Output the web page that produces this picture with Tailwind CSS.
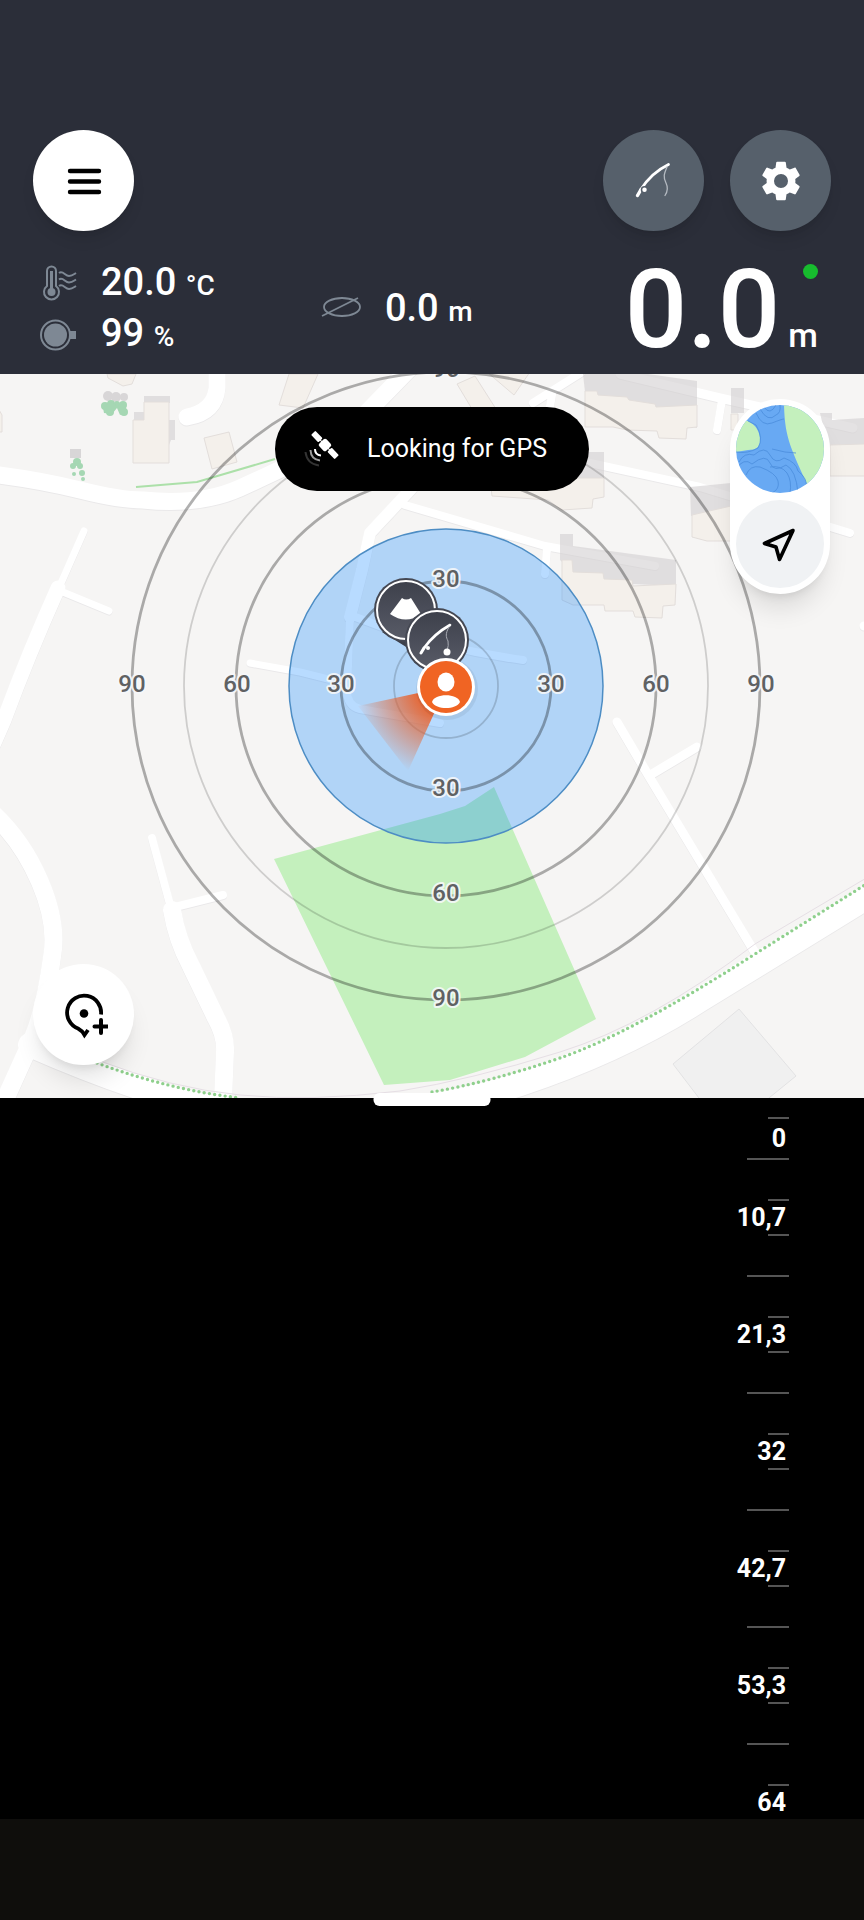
<!DOCTYPE html>
<html lang="en">
<head>
    <meta charset="UTF-8">
    <meta name="viewport" content="width=device-width, initial-scale=1.0">
    <title>Sonar - Map</title>
    <script src="https://cdn.jsdelivr.net/npm/@tailwindcss/browser@4"></script>
</head>
<body class="min-h-screen flex flex-col bg-black text-white font-[Roboto,sans-serif]">

    <!-- Header -->
    <header class="bg-[#2b2e39] px-[33px] pt-[130px] pb-3">
        <div class="flex items-center justify-between">
            <button type="button" aria-label="Menu" class="size-[101px] rounded-full bg-white flex items-center justify-center shadow-lg">
                <svg class="size-10" viewBox="0 0 40 40" stroke="#000" stroke-width="4.4" stroke-linecap="round"><path d="M6 10h29M6 20.500h29M6 31h29"/></svg>
            </button>
            <div class="flex gap-[26px]">
                <button type="button" aria-label="Fishing" class="size-[101px] rounded-full bg-[#56606b] flex items-center justify-center shadow-lg">
                    <svg class="size-10" viewBox="0 0 40 40" fill="none" stroke="#fff" stroke-linecap="round">
                        <path d="M3.500 34.500L7 28.500" stroke-width="3.400"/>
                        <path d="M6.500 29Q17 12 34.500 3.500" stroke-width="2.800"/>
                        <path d="M33 6C30 13 29 16 32 22C34 26 34 30 31 34.500" stroke="#b4bac1" stroke-width="1.300"/>
                        <circle cx="10.500" cy="28.700" r="3" fill="#fff" stroke="#56606b" stroke-width="1.500"/>
                    </svg>
                </button>
                <button type="button" aria-label="Settings" class="size-[101px] rounded-full bg-[#56606b] flex items-center justify-center shadow-lg">
                    <svg class="size-12" viewBox="0 0 24 24" fill="#fff"><path d="M19.140 12.940c.04-.3.06-.61.06-.94 0-.32-.02-.64-.07-.94l2.030-1.580c.18-.14.23-.41.12-.61l-1.920-3.320c-.12-.22-.37-.29-.59-.22l-2.390.96c-.5-.38-1.030-.7-1.620-.94l-.36-2.540c-.04-.24-.24-.41-.48-.41h-3.840c-.24 0-.43.17-.47.41l-.36 2.540c-.59.24-1.130.57-1.620.94l-2.390-.96c-.22-.08-.47 0-.59.22L2.740 8.870c-.12.21-.08.47.12.61l2.030 1.580c-.05.3-.09.63-.09.94s.02.64.07.94l-2.030 1.580c-.18.14-.23.41-.12.61l1.920 3.320c.12.22.37.29.59.22l2.390-.96c.5.38 1.030.7 1.620.94l.36 2.540c.05.24.24.41.48.41h3.840c.24 0 .44-.17.47-.41l.36-2.540c.59-.24 1.130-.56 1.620-.94l2.390.96c.22.08.47 0 .59-.22l1.920-3.320c.12-.22.07-.47-.12-.61l-2.010-1.580zM12 15.500a3.500 3.500 0 1 1 0-7 3.500 3.500 0 0 1 0 7z"/></svg>
                </button>
            </div>
        </div>

        <!-- Readings -->
        <div class="mt-[23px] flex items-center justify-between pl-1.5 pr-[13px] font-medium">
            <div class="flex flex-col">
                <div class="flex items-center gap-6">
                    <svg class="size-[38px]" viewBox="0 0 38 38" fill="none" stroke="#7e8894" stroke-width="2">
                        <path d="M8 22V7a4.500 4.500 0 0 1 9 0v15a7.500 7.500 0 1 1-9 0z"/>
                        <path d="M12.500 7v20" stroke-width="3"/>
                        <circle cx="12.500" cy="28" r="4" fill="#7e8894" stroke="none"/>
                        <path d="M20 9c4-3 6 3 10 3 3 0 4-1 7-3M20 15.500c4-3 6 3 10 3 3 0 4-1 7-3M20 22c4-3 6 3 10 3 3 0 4-1 7-3"/>
                    </svg>
                    <p class="text-[38px] leading-[51px]">20.0 <span class="text-[28px] leading-none">°C</span></p>
                </div>
                <div class="flex items-center gap-6">
                    <svg class="size-[38px]" viewBox="0 0 38 38">
                        <circle cx="16.500" cy="20" r="14.500" fill="none" stroke="#7e8894" stroke-width="2"/>
                        <circle cx="16.500" cy="20" r="11.500" fill="#7e8894"/>
                        <path d="M31 16h6v8h-6z" fill="#7e8894"/>
                    </svg>
                    <p class="text-[38px] leading-[51px]">99 <span class="text-[28px] leading-none">%</span></p>
                </div>
            </div>
            <div class="flex items-center gap-6 pr-[46px]">
                <svg class="size-10" viewBox="0 0 40 40" fill="none" stroke="#7e8894" stroke-width="1.800"><ellipse cx="21" cy="19" rx="18" ry="9"/><path d="M1 28L37 10"/></svg>
                <p class="text-[38px] leading-[51px]">0.0 <span class="text-[28px] leading-none">m</span></p>
            </div>
            <div class="relative flex items-baseline gap-2 pt-1">
                <p class="text-[110px] leading-[104px]">0.0</p>
                <span class="text-[34px] leading-none">m</span>
                <span class="absolute right-0 top-2.5 size-[15px] rounded-full bg-[#17bc2e]"></span>
            </div>
        </div>
    </header>

    <!-- Map -->
    <main class="relative w-full aspect-[864/724]">
        <svg class="size-full bg-[#f6f5f4]" viewBox="0 374 864 724" preserveAspectRatio="xMidYMid slice">
            <defs>
                <radialGradient id="beam" gradientUnits="userSpaceOnUse" cx="446" cy="687" r="92">
                    <stop offset="0.300" stop-color="#e8622c" stop-opacity="0.950"/>
                    <stop offset="1" stop-color="#e8622c" stop-opacity="0"/>
                </radialGradient>
                <linearGradient id="pin" x1="0" y1="0" x2="0" y2="1">
                    <stop offset="0" stop-color="#3d404b"/>
                    <stop offset="1" stop-color="#585b67"/>
                </linearGradient>
                <g id="roads">
                    <path stroke-width="17" d="M-9 474Q40 480 80 490T143 500Q200 506 240 488T340 440L412 366M217 366V388Q215 412 187 417"/>
                    <path stroke-width="7" d="M84 531L58 590L109 611M250 663L300 672L348 684"/>
                    <path stroke-width="15" d="M58 588Q28 655 4 720L-10 752"/>
                    <path stroke-width="12" d="M412 488L370 533L362 570L350 617"/>
                    <path stroke-width="8" d="M350 617L347 690Q347 706 360 709L440 723M350 615L385 628Q450 650 523 660M405 505L545 546L655 566M547 548L545 574M590 463L700 487L850 533M533 403L582 372M722 400L717 430M552 395L549 412"/>
                    <path stroke-width="9" d="M620 374L720 398L853 428M617 722L650 778L757 956M652 774L697 747M864 626h9"/>
                    <path stroke-width="18" d="M-9 812Q22 840 40 882T52 957Q45 1010 32 1040L4 1102M172 910Q177 940 191 966L216 1018Q226 1036 225 1052L223 1100"/>
                    <path stroke-width="8" d="M152 838L171 908L223 895"/>
                    <path stroke-width="24" d="M30 1045Q110 1080 170 1097T280 1118Q420 1117 520 1084T700 1000L874 893"/>
                </g>
            </defs>

            <!-- Plot, roads -->
            <path d="M739 1009L796 1076L764 1102H702L673 1064z" fill="#f0f0f0" stroke="#e2e2e3"/>
            <use href="#roads" fill="none" stroke="#eae9ea" stroke-linecap="round" stroke-linejoin="round" transform="translate(0 1)"/>
            <use href="#roads" fill="none" stroke="#fff" stroke-linecap="round" stroke-linejoin="round"/>

            <!-- Buildings -->
            <g fill="#d2cfd1" fill-opacity="0.600">
                <path d="M144 396L170 396L170 403H144V420H134V412H144zM169 420H175V440H171L169 445z"/>
                <path d="M583 374H648L697 381V428L585 392z"/>
                <path d="M560 452H604V497L593 479H560z"/>
                <path d="M690 487L731 483V509L691 516z"/>
                <path d="M560 534H573V546L632 554L676 560V586L632 584L604 579L573 572L560 560z"/>
                <path d="M731 388H744V413H731zM820 413H832V420L864 418V444L828 447z"/>
            </g>
            <g fill="#f4f0eb" stroke="#e3dedb" stroke-width="1">
                <path d="M133 420H144V402H169V463H133z"/>
                <path d="M204 438L229 432L237 462L212 469z"/>
                <path d="M289 374H318L303 408L279 405z"/>
                <path d="M107 374H136L132 384L123 386L108 378z"/>
                <path d="M457 384L475 376L496 409H472zM487 372H530L514 395z"/>
                <path d="M585 391H597L598 395L627 397L629 400L655 404L656 407L697 405V427L687 428L686 439L659 438L657 431L627 430L613 427H585z"/>
                <path d="M490 478H604V497L593 499L592 508L562 510L548 500L492 496z"/>
                <path d="M692 515L731 506V541H707L692 537z"/>
                <path d="M562 560H572L573 572L603 573L604 579L632 580L633 586L676 584L675 605L663 606L662 618L635 617L633 611H605L604 605H573L562 600z"/>
                <path d="M830 445L864 444H870V476H830zM731 414H738V430H731zM-2 408L2 415V432H-2z"/>
            </g>

            <!-- Trees -->
            <g fill="#d8d6d7">
                <circle cx="108" cy="396" r="5"/><circle cx="116" cy="397" r="5"/><circle cx="124" cy="397" r="4"/>
                <path d="M70 449H81V458H70z"/>
            </g>
            <g fill="#a5d7b3">
                <circle cx="105" cy="406" r="4"/><circle cx="111" cy="404" r="4"/><circle cx="110" cy="412" r="4"/><circle cx="123" cy="405" r="4"/><circle cx="124" cy="412" r="4"/><circle cx="117" cy="404" r="3"/>
                <path d="M103 408L112 402L117 406L125 404L127 412L120 415L117 408L112 414L104 413z"/>
                <circle cx="77" cy="462" r="4"/><circle cx="73" cy="466" r="3"/><circle cx="80" cy="466" r="3"/><circle cx="74" cy="474" r="2"/><circle cx="82" cy="473" r="3"/><circle cx="83" cy="479" r="2"/>
            </g>

            <!-- Paths along the roads -->
            <path d="M136 487L197 482L275 459" fill="none" stroke="#ace0a9" stroke-width="2"/>
            <path d="M97 1060Q170 1088 240 1095T400 1091Q470 1080 560 1052T755 944L868 877" fill="none" stroke="#e6dfe5"/>
            <path d="M97 1063Q170 1090 240 1098M432 1092Q490 1082 560 1058T755 954L868 883" fill="none" stroke="#8fd08d" stroke-width="3.400" stroke-linecap="round" stroke-dasharray="0 5.300"/>

            <!-- Zones and range rings -->
            <path d="M274 859L440 814L465 806L494 787L596 1019L525 1057L450 1080L384 1085z" fill="#c4f0bd"/>
            <circle cx="446" cy="686" r="157" fill="#007fff" fill-opacity="0.280" stroke="#4d8dc4" stroke-width="1.500"/>
            <g fill="none" stroke="#000">
                <g stroke-opacity="0.160" stroke-width="1.800">
                    <circle cx="446" cy="686" r="52"/>
                    <circle cx="446" cy="686" r="262"/>
                </g>
                <g stroke-opacity="0.310" stroke-width="2.800">
                    <circle cx="446" cy="686" r="105"/>
                    <circle cx="446" cy="686" r="210"/>
                    <circle cx="446" cy="686" r="314"/>
                </g>
            </g>
            <g class="text-2xl font-medium [paint-order:stroke]" fill="#5f6163" stroke="#f6f8fa" stroke-opacity="0.900" stroke-width="4" stroke-linejoin="round" text-anchor="middle">
                <text x="132" y="692">90</text>
                <text x="237" y="692">60</text>
                <text x="341" y="692">30</text>
                <text x="551" y="692">30</text>
                <text x="656" y="692">60</text>
                <text x="761" y="692">90</text>
                <text x="446" y="377">90</text>
                <text x="446" y="587">30</text>
                <text x="446" y="796">30</text>
                <text x="446" y="901">60</text>
                <text x="446" y="1006">90</text>
            </g>

            <!-- Markers -->
            <path d="M446 687L358 706L408 771z" fill="url(#beam)"/>
            <path d="M382 632L424 658L436 632zM414 662L446 686L460 664z" fill="#3d404b"/>
            <circle cx="406" cy="610" r="32" fill="#454853"/>
            <circle cx="406" cy="610" r="29" fill="url(#pin)" stroke="#fff" stroke-width="2"/>
            <path d="M402 598Q406 601 411 598L421 614Q406 625 390 614z" fill="#fff"/>
            <circle cx="437" cy="640" r="32" fill="#454853"/>
            <circle cx="437" cy="640" r="29" fill="url(#pin)" stroke="#fff" stroke-width="2"/>
            <g fill="none" stroke="#fff" stroke-linecap="round">
                <path d="M421 653L424 648" stroke-width="3"/>
                <path d="M424 648Q434 634 450 625" stroke-width="2.600"/>
                <path d="M449 627C445 634 446 637 448 641Q449 645 447 651" stroke="#a9acb4" stroke-width="1"/>
                <circle cx="428" cy="648" r="2" fill="#fff" stroke="none"/>
                <circle cx="447" cy="652" r="3.500" fill="#fff" stroke="none"/>
            </g>
            <circle cx="447" cy="689" r="31" fill="#000" fill-opacity="0.060"/>
            <circle cx="446" cy="687" r="29" fill="#fff"/>
            <circle cx="446" cy="687" r="26" fill="#f06423"/>
            <ellipse cx="446" cy="682" rx="8.500" ry="9.500" fill="#fff"/>
            <path d="M432 702C434 693 458 693 460 702C456 710 436 710 432 702z" fill="#fff"/>
        </svg>

        <!-- GPS status -->
        <div role="status" class="absolute top-[33px] left-1/2 -translate-x-1/2 h-[84px] pl-[26px] pr-[42px] rounded-full bg-black flex items-center gap-[22px] whitespace-nowrap">
            <svg class="size-11" viewBox="0 0 44 44" fill="#fff">
                <g transform="rotate(46 24 18)">
                    <rect x="19" y="13" width="10" height="10" rx="2"/>
                    <rect x="7" y="15" width="10.500" height="6" rx="1"/>
                    <rect x="30.500" y="15" width="10.500" height="6" rx="1"/>
                    <path d="M17 17.500h14v1H17z"/>
                </g>
                <g fill="none" stroke="#fff" stroke-width="2">
                    <path d="M14 22Q14 28 20 28.500"/>
                    <path d="M9.500 23Q10 32.500 19 33.500" opacity="0.600"/>
                    <path d="M4.500 25Q6 37 18 38.500" opacity="0.200"/>
                </g>
            </svg>
            <span class="text-[25px]">Looking for GPS</span>
        </div>

        <!-- Layer / compass buttons -->
        <div class="absolute top-[25px] right-[34px] flex flex-col gap-[7px] p-1.5 rounded-full bg-white shadow-xl">
            <button type="button" aria-label="Map type" class="size-[88px] rounded-full overflow-hidden">
                <svg class="size-full" viewBox="0 0 88 88">
                    <path d="M0 0h88v88H0z" fill="#68a9f3"/>
                    <path d="M48 0C49 35 55 43 75 88H88V0zM0 16H12Q24 22 24 36Q24 45 12 45L0 47z" fill="#c4f0bd"/>
                    <g fill="none" stroke="#4b8ddc" stroke-opacity="0.800">
                        <path d="M12 16L20 20Q28 33 22 43Q12 49 0 47M24 4Q32 18 40 10Q45 8 44 0M28 2Q34 11 40 0M20 8Q26 22 36 18T48 14"/>
                        <path d="M3 57Q8 47 18 50Q29 40 34 50T48 53Q60 57 62 66Q72 74 70 82M0 64Q8 52 16 59Q30 48 34 58T50 60Q60 65 62 88M10 70Q14 60 24 62Q40 68 42 76Q44 84 36 88M34 62Q45 60 51 68Q56 76 54 88M36 44Q50 48 60 48"/>
                    </g>
                </svg>
            </button>
            <button type="button" aria-label="My location" class="size-[88px] rounded-full bg-[#f0f2f4] flex items-center justify-center">
                <svg class="size-10" viewBox="0 0 40 40" fill="none" stroke="#000" stroke-width="3.600" stroke-linejoin="round"><path d="M33 6.500L4.500 19.500L16 23L19.500 35.500z"/></svg>
            </button>
        </div>

        <button type="button" aria-label="Add waypoint" class="absolute left-[33px] bottom-[33px] size-[101px] rounded-full bg-white flex items-center justify-center shadow-xl">
            <svg class="size-12" viewBox="0 0 48 48" fill="none" stroke="#000" stroke-width="3.800">
                <path d="M41 23.500A17 17 0 1 0 18 37.500Q22 39.500 24.500 44L28 39"/>
                <circle cx="24" cy="22.500" r="4.300" fill="#000" stroke="none"/>
                <path d="M41 29v13M34.500 35.500h13" stroke-width="4" stroke-linecap="round"/>
            </svg>
        </button>

        <!-- Split handle -->
        <div class="absolute -bottom-2 left-1/2 -translate-x-1/2 w-[117px] h-[13px] rounded-md bg-white"></div>
    </main>

    <!-- Depth scale -->
    <section class="grow pt-[19px] pr-[75px]">
        <ul id="scale" class="flex flex-col text-[25px] font-bold text-right"></ul>
    </section>

    <div class="h-[101px] bg-[#0f0e0c]"></div>

    <script>
        const depths = ['10,7', '21,3', '32', '42,7', '53,3', '64'];
        const scale = document.getElementById('scale');

        // One row per step: short, long and short tick, then the depth
        depths.forEach((depth, i) => {
            const row = document.createElement('li');
            row.className = 'flex flex-col items-end';
            row.innerHTML = `
                <span class="w-[21px] h-0.5 bg-[#555]"></span>
                <span class="h-[39px] leading-[39px] pr-[3px]">${i === 0 ? '0' : ''}</span>
                <span class="w-[42px] h-0.5 bg-[#555]"></span>
                <span class="h-[39px]"></span>
                <span class="w-[21px] h-0.5 bg-[#555]"></span>
                <span class="h-[33px] leading-[33px] pr-[3px]">${depth}</span>`;
            scale.appendChild(row);
        });
    </script>
</body>
</html>
